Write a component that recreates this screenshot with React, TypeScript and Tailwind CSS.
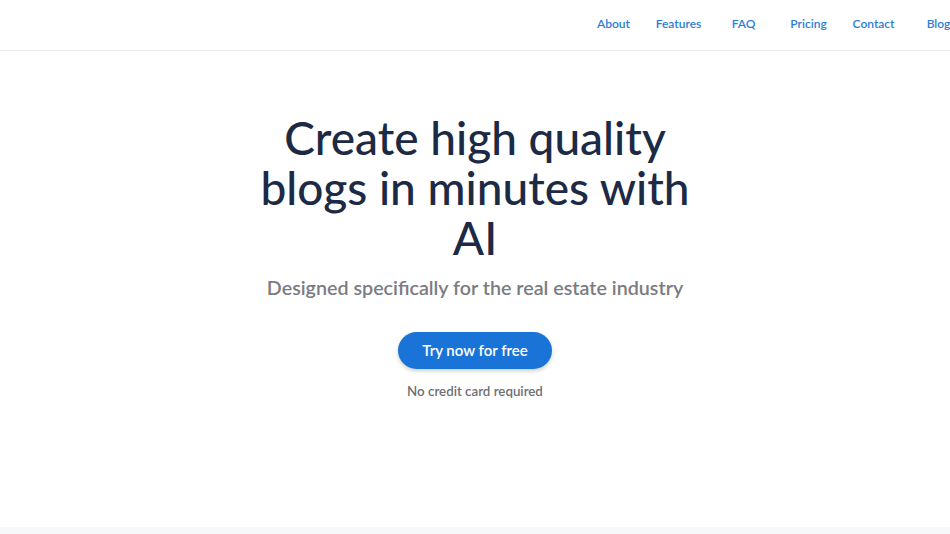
const navLinks = ['About', 'Features', 'FAQ', 'Pricing', 'Contact', 'Blog'];

const App = () => {
  return (
    <div className="min-h-screen overflow-hidden bg-white font-['Lato',sans-serif]">
      <header className="h-[51px] border-b border-[#e8e9ec] flex items-center pb-[2px]">
        <nav className="ml-auto mr-[-21px] flex">
          {navLinks.map((link) => (
            <a
              key={link}
              href="#"
              className="w-[65px] text-center text-[12px] font-semibold text-[#2b7ddb]"
            >
              {link}
            </a>
          ))}
        </nav>
      </header>

      <section className="h-[476px] flex flex-col items-center pt-[62px]">
        <h1 className="max-w-[440px] text-center text-[46px] leading-[50px] font-medium text-[#1c2a45]">
          Create high quality blogs in minutes with AI
        </h1>
        <p className="mt-[11px] text-[19.7px] leading-[28px] font-semibold text-[#7b7b82]">
          Designed specifically for the real estate industry
        </p>
        <button className="mt-[30px] h-[37px] w-[154px] rounded-full bg-[#1a74d8] text-[15px] font-semibold text-white shadow-[0_2px_4px_rgba(0,0,0,0.2)]">
          Try now for free
        </button>
        <p className="mt-[13px] text-[13.3px] leading-[18px] font-semibold text-[#6e6e73]">
          No credit card required
        </p>
      </section>

      <section className="h-[7px] bg-[#f7f8fa]" />
    </div>
  );
};

export default App;
